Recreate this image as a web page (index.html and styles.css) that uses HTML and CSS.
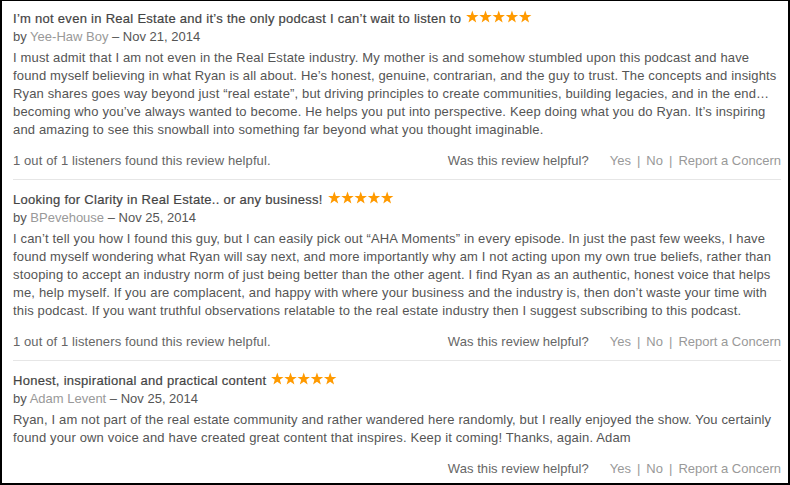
FILE: index.html
```html
<!DOCTYPE html>
<html>
<head>
<meta charset="utf-8">
<link rel="stylesheet" href="styles.css">
</head>
<body>
<div class="reviews">
  <div class="review">
    <div class="title">I’m not even in Real Estate and it’s the only podcast I can’t wait to listen to <span class="stars"><svg viewBox="0 0 70 14" width="68" height="14"><g fill="#ff9a00"><path id="s" d="M6.5 0.4 L8.1 4.9 L12.9 5 L9.1 7.9 L10.5 12.6 L6.5 9.8 L2.5 12.6 L3.9 7.9 L0.1 5 L4.9 4.9 Z"/><use href="#s" x="13.6"/><use href="#s" x="27.2"/><use href="#s" x="40.8"/><use href="#s" x="54.4"/></g></svg></span></div>
    <div class="byline">by <span class="author">Yee-Haw Boy</span> – Nov 21, 2014</div>
    <p class="body">I must admit that I am not even in the Real Estate industry. My mother is and somehow stumbled upon this podcast and have<br>found myself believing in what Ryan is all about. He’s honest, genuine, contrarian, and the guy to trust. The concepts and insights<br>Ryan shares goes way beyond just “real estate”, but driving principles to create communities, building legacies, and in the end…<br>becoming who you’ve always wanted to become. He helps you put into perspective. Keep doing what you do Ryan. It’s inspiring<br>and amazing to see this snowball into something far beyond what you thought imaginable.</p>
    <div class="helpful">
      <span class="count">1 out of 1 listeners found this review helpful.</span>
      <span class="actions"><span class="ask">Was this review helpful?</span><span class="link">Yes</span><span class="sep">|</span><span class="link">No</span><span class="sep">|</span><span class="link">Report a Concern</span></span>
    </div>
  </div>
  <div class="review">
    <div class="title">Looking for Clarity in Real Estate.. or any business! <span class="stars"><svg viewBox="0 0 70 14" width="68" height="14"><g fill="#ff9a00"><use href="#s"/><use href="#s" x="13.6"/><use href="#s" x="27.2"/><use href="#s" x="40.8"/><use href="#s" x="54.4"/></g></svg></span></div>
    <div class="byline">by <span class="author">BPevehouse</span> – Nov 25, 2014</div>
    <p class="body">I can’t tell you how I found this guy, but I can easily pick out “AHA Moments” in every episode. In just the past few weeks, I have<br>found myself wondering what Ryan will say next, and more importantly why am I not acting upon my own true beliefs, rather than<br>stooping to accept an industry norm of just being better than the other agent. I find Ryan as an authentic, honest voice that helps<br>me, help myself. If you are complacent, and happy with where your business and the industry is, then don’t waste your time with<br>this podcast. If you want truthful observations relatable to the real estate industry then I suggest subscribing to this podcast.</p>
    <div class="helpful">
      <span class="count">1 out of 1 listeners found this review helpful.</span>
      <span class="actions"><span class="ask">Was this review helpful?</span><span class="link">Yes</span><span class="sep">|</span><span class="link">No</span><span class="sep">|</span><span class="link">Report a Concern</span></span>
    </div>
  </div>
  <div class="review last">
    <div class="title">Honest, inspirational and practical content <span class="stars"><svg viewBox="0 0 70 14" width="68" height="14"><g fill="#ff9a00"><use href="#s"/><use href="#s" x="13.6"/><use href="#s" x="27.2"/><use href="#s" x="40.8"/><use href="#s" x="54.4"/></g></svg></span></div>
    <div class="byline">by <span class="author">Adam Levent</span> – Nov 25, 2014</div>
    <p class="body">Ryan, I am not part of the real estate community and rather wandered here randomly, but I really enjoyed the show. You certainly<br>found your own voice and have created great content that inspires. Keep it coming! Thanks, again. Adam</p>
    <div class="helpful">
      <span class="count"></span>
      <span class="actions"><span class="ask">Was this review helpful?</span><span class="link">Yes</span><span class="sep">|</span><span class="link">No</span><span class="sep">|</span><span class="link">Report a Concern</span></span>
    </div>
  </div>
</div>
</body>
</html>
```

FILE: styles.css
```css
html, body {
  margin: 0;
  padding: 0;
  background: #fff;
}
.reviews {
  box-sizing: border-box;
  width: 790px;
  height: 485px;
  border: 2px solid #000;
  border-top-width: 1px;
  padding: 9px 7px 0 11px;
  font-family: "Liberation Sans", Arial, sans-serif;
  font-size: 13px;
  line-height: 18px;
  color: #555;
}
.review {
  border-bottom: 1px solid #e6e6e6;
  padding-bottom: 9px;
  margin-bottom: 11px;
}
.review.last {
  border-bottom: none;
}
.title {
  color: #444;
  letter-spacing: 0.28px;
  -webkit-text-stroke: 0.2px #444;
}
.stars {
  display: inline-block;
  vertical-align: -1px;
  margin-left: 1px;
}
.stars svg {
  display: block;
}
.byline {
  color: #555;
}
.author {
  color: #999;
}
.body {
  margin: 3px 0 0;
  color: #555;
  letter-spacing: 0.15px;
  white-space: nowrap;
}
.helpful {
  display: flex;
  justify-content: space-between;
  margin-top: 13px;
  color: #666;
  letter-spacing: 0.1px;
}
.actions {
  display: flex;
  letter-spacing: 0;
}
.ask {
  margin-right: 21px;
  letter-spacing: 0.05px;
}
.link {
  color: #999;
}
.sep {
  color: #999;
  margin: 0 6px;
}
```
